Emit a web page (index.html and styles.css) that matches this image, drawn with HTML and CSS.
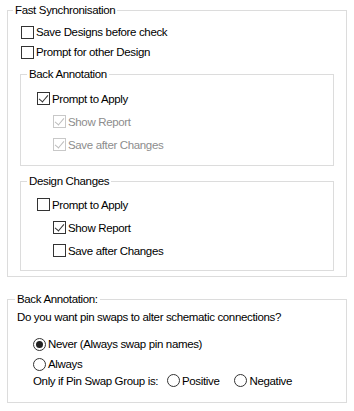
FILE: index.html
```html
<!DOCTYPE html>
<html>
<head>
<meta charset="utf-8">
<link rel="stylesheet" href="styles.css">
</head>
<body>
<div class="page">
  <fieldset class="group outer">
    <legend class="legend">Fast Synchronisation</legend>
    <div class="body">
      <div class="rows top-rows">
        <div class="row l1"><span class="cb"></span><span>Save Designs before check</span></div>
        <div class="row l1"><span class="cb"></span><span>Prompt for other Design</span></div>
      </div>
      <fieldset class="group inner first">
        <legend class="legend small">Back Annotation</legend>
        <div class="rows">
          <div class="row r23 l2"><span class="cb checked"></span><span>Prompt to Apply</span></div>
          <div class="row r23 l3 disabled"><span class="cb checked"></span><span>Show Report</span></div>
          <div class="row r23 l3 disabled"><span class="cb checked"></span><span>Save after Changes</span></div>
        </div>
      </fieldset>
      <fieldset class="group inner second">
        <legend class="legend small">Design Changes</legend>
        <div class="rows">
          <div class="row r23 l2"><span class="cb"></span><span>Prompt to Apply</span></div>
          <div class="row r23 l3"><span class="cb checked"></span><span>Show Report</span></div>
          <div class="row r23 l3"><span class="cb"></span><span>Save after Changes</span></div>
        </div>
      </fieldset>
    </div>
  </fieldset>

  <fieldset class="group bottom">
    <legend class="legend wide">Back Annotation:</legend>
    <div class="body bottom-body">
      <div class="question">Do you want pin swaps to alter schematic connections?</div>
      <div class="radios">
        <div class="row rr"><span class="rb on"></span><span>Never (Always swap pin names)</span></div>
        <div class="row rr"><span class="rb"></span><span>Always</span></div>
        <div class="row rr only">
          <span class="only-label">Only if Pin Swap Group is:</span>
          <span class="opt"><span class="rb"></span><span>Positive</span></span>
          <span class="opt"><span class="rb"></span><span>Negative</span></span>
        </div>
      </div>
    </div>
  </fieldset>
</div>
</body>
</html>
```
FILE: styles.css
```css
* { box-sizing: border-box; }
html, body { margin: 0; padding: 0; background: #ffffff; }
body {
  font-family: "Liberation Sans", Arial, sans-serif;
  font-size: 11.5px;
  letter-spacing: -0.35px;
  color: #000;
  width: 354px;
  height: 411px;
  overflow: hidden;
}
.page { padding: 3px 0 0 7px; }

.group {
  margin: 0;
  padding: 0;
  border: 1px solid #dcdcdc;
  min-width: 0;
}
.legend {
  padding: 0 2px;
  margin-left: 5px;
  line-height: 14px;
  height: 14px;
}
.legend.small { margin-left: 6px; }
.legend.wide { margin-left: 7px; }

.outer { width: 340px; padding-bottom: 5px; }
.outer > .body { padding: 0 12px; }
.top-rows { padding-top: 5px; }

.row {
  display: flex;
  align-items: center;
  height: 20px;
  white-space: nowrap;
}
.row.r23 { height: 23px; }
.row .cb, .row .rb { margin-right: 2px; }

.l1 { padding-left: 1px; }

.inner { width: 314px; margin-top: 5px; padding: 0 0 9px 0; }
.inner.second { margin-top: 8px; padding-bottom: 8px; }
.inner .rows { padding-top: 6px; }
.inner.second .rows { padding-top: 5px; }
.l2 { padding-left: 16px; }
.l3 { padding-left: 32px; }

.cb {
  width: 13px;
  height: 13px;
  border: 1px solid #333;
  background: #fff;
  flex: none;
  position: relative;
}
.cb.checked::after {
  content: "";
  position: absolute;
  left: 3px;
  top: 0px;
  width: 4px;
  height: 8px;
  border-right: 1px solid #333;
  border-bottom: 1px solid #333;
  transform: rotate(40deg);
}
.disabled { color: #8d8d8d; }
.disabled .cb { border-color: #c8c8c8; }
.disabled .cb.checked::after { border-color: #bcbcbc; }

.bottom { width: 340px; margin-top: 15px; padding-bottom: 9px; }
.bottom-body { padding: 0 9px; }
.question { height: 18px; line-height: 18px; padding-top: 0; margin-top: 2px; }
.radios { padding-top: 8px; padding-left: 16px; }
.rr { height: 20px; }
.rr.only { height: 19px; margin-top: -3px; margin-bottom: 3px; }

.rb {
  width: 13px;
  height: 13px;
  border: 1px solid #333;
  border-radius: 50%;
  background: #fff;
  flex: none;
  position: relative;
}
.rb.on::after {
  content: "";
  position: absolute;
  left: 2px;
  top: 2px;
  width: 7px;
  height: 7px;
  border-radius: 50%;
  background: #222;
}
.only-label { width: 134px; }
.opt { display: flex; align-items: center; margin-right: 15px; }
```
